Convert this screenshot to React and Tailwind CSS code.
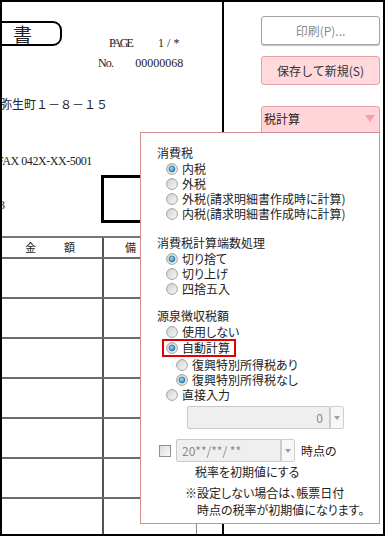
import React, { useId } from "react";

function Radio({ checked }) {
  const id = useId().replace(/[^a-zA-Z0-9]/g, "");
  return (
    <svg width="12" height="12" viewBox="0 0 12 12" className="shrink-0">
      <defs>
        <linearGradient id={id + "g"} x1="0" y1="0" x2="1" y2="1">
          <stop offset="0" stopColor="#cfcfcf" />
          <stop offset="1" stopColor="#fafafa" />
        </linearGradient>
        <radialGradient id={id + "b"} cx="0.4" cy="0.35" r="0.75">
          <stop offset="0" stopColor="#9adcff" />
          <stop offset="1" stopColor="#1d6fb0" />
        </radialGradient>
      </defs>
      <circle cx="6" cy="6" r="5.4" fill={`url(#${id}g)`} stroke="#a2a2a2" strokeWidth="1" />
      {checked && <circle cx="6" cy="6" r="3" fill={`url(#${id}b)`} stroke="#2c5e88" strokeWidth="0.6" />}
    </svg>
  );
}

function RadioRow({ label, checked, indent }) {
  return (
    <div className={`flex items-center h-[15px] gap-[4px] ${indent ? "pl-[19px]" : "pl-[9px]"}`}>
      <Radio checked={checked} />
      <span>{label}</span>
    </div>
  );
}

function DropBtn() {
  return (
    <div className="w-[14px] h-full border border-[#cfcfcf] bg-[#f7f7f7] rounded-r-[2px] flex items-center justify-center">
      <svg width="6" height="4" viewBox="0 0 6 4">
        <path d="M0 0 L6 0 L3 4 Z" fill="#a0a0a0" />
      </svg>
    </div>
  );
}

const rows = [0, 1, 2, 3, 4, 5, 6];

export default function App() {
  return (
    <div className="relative w-[385px] h-[536px] border-2 border-black bg-white flex overflow-hidden">
      {/* document preview */}
      <div className="w-[222px] h-full border-r-2 border-black flex flex-col overflow-hidden text-[#222] font-['Liberation_Serif','Noto_Sans_CJK_JP',serif]">
        <div className="flex items-start mt-[19px]">
          <div className="-ml-[10px] w-[70px] h-[25px] border-2 border-black rounded-r-[9px] flex items-center pl-[19px] text-[19px] leading-none font-['Noto_Sans_CJK_JP',sans-serif]">
            書
          </div>
          <div className="ml-[36px] mt-[16px] flex flex-col text-[12px] leading-[12px]">
            <div className="flex pl-[11px]">
              <span className="tracking-[-1.8px]">PAGE</span>
              <span className="ml-[26px] whitespace-pre">1 / *</span>
            </div>
            <div className="flex mt-[8px]">
              <span className="tracking-[-0.8px]">No.</span>
              <span className="ml-[22px]">00000068</span>
            </div>
          </div>
        </div>
        <div className="-ml-[2px] mt-[28px] h-[14px] text-[12px] leading-[14px] whitespace-nowrap font-['Noto_Sans_CJK_JP',sans-serif]">
          弥生町１－８－１５
        </div>
        <div className="-ml-[5px] mt-[44px] h-[12px] text-[12px] leading-[12px] whitespace-nowrap tracking-[-0.45px]">
          FAX 042X-XX-5001
        </div>
        <div className="flex items-start mt-[8px]">
          <span className="-ml-[3px] w-[6px] mt-[24px] text-[12px] leading-[12px]">3</span>
          <div className="ml-[96px] w-[70px] h-[48px] border-[3px] border-black shrink-0"></div>
        </div>
        <div className="mt-[13px] flex-1 flex flex-col border-t-2 border-[#777]">
          <div className="flex h-[19px] text-[11px] leading-[19px] font-['Noto_Sans_CJK_JP',sans-serif]">
            <div className="w-[102px] border-r-2 border-[#555] flex">
              <span className="ml-[23px]">金</span>
              <span className="ml-[28px]">額</span>
            </div>
            <div className="w-[93px] border-r border-[#888] pl-[21px]">備</div>
            <div className="flex-1"></div>
          </div>
          {rows.map((r) => (
            <div key={r} className="flex h-[40px] shrink-0 border-t-2 border-[#6b6b6b]">
              <div className="w-[102px] border-r-2 border-[#555]"></div>
              <div className="w-[93px] border-r border-[#888]"></div>
              <div className="flex-1"></div>
            </div>
          ))}
        </div>
      </div>

      {/* right panel */}
      <div className="flex-1 flex flex-col pl-[37px] pr-[3px] pt-[14px] text-[12px] font-['Noto_Sans_CJK_JP',sans-serif]">
        <button className="h-[29px] border border-[#a3a3a3] rounded-[3px] bg-white text-[#8a8a8a] shadow-[0_1px_1px_rgba(0,0,0,0.25)]">
          印刷(P)...
        </button>
        <button className="mt-[11px] h-[29px] border border-[#e7a1a6] rounded-[3px] bg-[#ffd9dc] text-[#333]">
          保存して新規(S)
        </button>
        <div className="mt-[21px] h-[28px] border border-[#e7a1a6] rounded-t-[3px] bg-[#ffd5da] flex items-start pt-[3px] pl-[2px] pr-[4px] text-[#222]">
          <span>税計算</span>
          <svg width="10" height="7" viewBox="0 0 10 7" className="ml-auto mt-[5px]">
            <path d="M0 0 L10 0 L5 7 Z" fill="#f3a0a7" />
          </svg>
        </div>
      </div>

      {/* tax popup */}
      <div className="absolute left-[138px] top-[130px] w-[240px] h-[392px] border border-[#d48c90] bg-white pl-[16px] pt-[12px] text-[12px] text-[#222] font-['Noto_Sans_CJK_JP',sans-serif] [font-feature-settings:'palt'] whitespace-nowrap">
        <div className="h-[16px] leading-[16px]">消費税</div>
        <RadioRow label="内税" checked />
        <RadioRow label="外税" />
        <RadioRow label="外税(請求明細書作成時に計算)" />
        <RadioRow label="内税(請求明細書作成時に計算)" />

        <div className="mt-[14px] h-[16px] leading-[16px]">消費税計算端数処理</div>
        <RadioRow label="切り捨て" checked />
        <RadioRow label="切り上げ" />
        <RadioRow label="四捨五入" />

        <div className="mt-[12px] h-[16px] leading-[16px]">源泉徴収税額</div>
        <RadioRow label="使用しない" />
        <div className="flex">
          <div className="ml-[5px] h-[18px] border-2 border-[#e10000] flex items-center gap-[4px] pl-[2px] pr-[4px]">
            <Radio checked />
            <span>自動計算</span>
          </div>
        </div>
        <RadioRow label="復興特別所得税あり" indent />
        <RadioRow label="復興特別所得税なし" checked indent />
        <RadioRow label="直接入力" />

        <div className="mt-[4px] ml-[30px] flex h-[23px]">
          <div className="w-[143px] border border-[#c9c9c9] rounded-l-[2px] bg-[#efefef] text-[#8a8a8a] flex items-center justify-end pr-[6px]">
            0
          </div>
          <DropBtn />
        </div>

        <div className="mt-[10px] flex items-center h-[23px]">
          <div className="ml-[2px] w-[12px] h-[12px] border border-[#8f8f8f] bg-[linear-gradient(135deg,#dcdcdc,#f8f8f8)]"></div>
          <div className="ml-[5px] flex h-full">
            <div className="w-[105px] border border-[#c9c9c9] rounded-l-[2px] bg-[#efefef] text-[#8a8a8a] flex items-center pl-[5px]">
              20**/**/ **
            </div>
            <DropBtn />
          </div>
          <span className="ml-[6px]">時点の</span>
        </div>
        <div className="mt-[2px] h-[16px] leading-[16px] pl-[38px]">税率を初期値にする</div>
        <div className="mt-[5px] h-[16px] leading-[16px] pl-[28px]">※設定しない場合は、帳票日付</div>
        <div className="mt-[1px] h-[16px] leading-[16px] pl-[40px]">時点の税率が初期値になります。</div>
      </div>
    </div>
  );
}
